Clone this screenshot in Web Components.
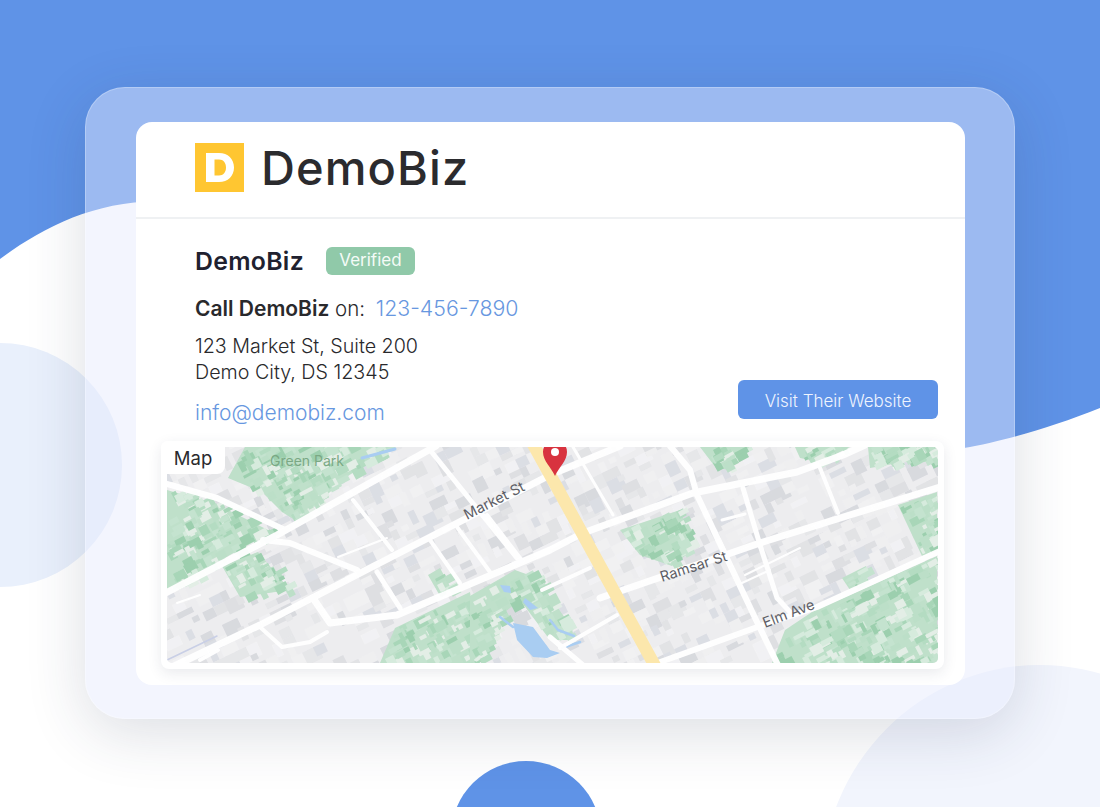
<!DOCTYPE html>
<html lang="en">
<head>
<meta charset="utf-8">
<title>DemoBiz</title>
<style>
html, body { margin: 0; padding: 0; background: #fff; }
body { font-family: Inter, "Liberation Sans", sans-serif; }
</style>
</head>
<body>
<demo-page>
  <demo-frame>
    <biz-card>
      <biz-logo slot="header">DemoBiz</biz-logo>
      <biz-info name="DemoBiz" phone="123-456-7890" email="info@demobiz.com">
        <span>123 Market St, Suite 200</span>
        <span>Demo City, DS 12345</span>
      </biz-info>
      <map-panel slot="map"></map-panel>
    </biz-card>
  </demo-frame>
</demo-page>

<script>
class DemoPage extends HTMLElement {
    constructor() {
        super();
        this.attachShadow({ mode: 'open' });
        this.shadowRoot.innerHTML = `
        <style>
            :host { display: block; position: relative; width: 1100px; height: 807px; overflow: hidden; background: #fff; }
            svg { position: absolute; inset: 0; }
            .wrap { position: relative; padding: 87px 0 0 85px; }
        </style>
        <svg width="1100" height="807" viewBox="0 0 1100 807">
            <path fill="#5f93e7" d="M0 0H1100V408C1050 428 1000 442 964 448C860 468 760 470 640 420C460 340 320 215 170 202C100 198 45 226 0 259Z"/>
            <circle cx="0" cy="465" r="122" fill="#e9f0fc"/>
            <circle cx="526" cy="836" r="75" fill="#5f93e7"/>
            <ellipse cx="1040" cy="885" rx="218" ry="220" fill="#f2f5fd"/>
        </svg>
        <div class="wrap"><slot></slot></div>`;
    }
}

class DemoFrame extends HTMLElement {
    constructor() {
        super();
        this.attachShadow({ mode: 'open' });
        this.shadowRoot.innerHTML = `
        <style>
            :host {
                display: block; box-sizing: border-box; width: 930px; height: 632px;
                padding: 34px 50px;
                border-radius: 40px;
                border: 1px solid rgba(255,255,255,.25);
                background: rgba(228,234,252,.46);
                box-shadow: 0 14px 60px rgba(40,50,80,.16);
            }
        </style>
        <slot></slot>`;
    }
}

class BizCard extends HTMLElement {
    constructor() {
        super();
        this.attachShadow({ mode: 'open' });
        this.shadowRoot.innerHTML = `
        <style>
            :host { display: flex; flex-direction: column; width: 829px; height: 563px; background: #fff; border-radius: 16px; }
            header { padding: 20px 59px 25px; border-bottom: 2px solid #eff1f3; }
            .map { padding: 0 21px 0 25px; }
        </style>
        <header><slot name="header"></slot></header>
        <slot></slot>
        <div class="map"><slot name="map"></slot></div>`;
    }
}

class BizLogo extends HTMLElement {
    constructor() {
        super();
        this.attachShadow({ mode: 'open' });
        this.shadowRoot.innerHTML = `
        <style>
            :host { display: flex; align-items: center; gap: 17px; height: 50px; font-size: 47px; font-weight: 500; color: #2b2b2e; letter-spacing: 1.100px; }
            svg { display: block; }
        </style>
        <svg width="49" height="49" viewBox="0 0 49 49">
            <rect width="49" height="49" fill="#ffc631"/>
            <path fill="#fff" fill-rule="evenodd" d="M11 10H24C33 10 39 16 39 24.500C39 33 33 39 24 39H11ZM19.500 16.500V32.500H24C28.500 32.500 31 29 31 24.500C31 20 28.500 16.500 24 16.500Z"/>
        </svg>
        <slot></slot>`;
    }
}

class BizInfo extends HTMLElement {
    constructor() {
        super();
        this.attachShadow({ mode: 'open' });
    }
    connectedCallback() {
        this.shadowRoot.innerHTML = `
        <style>
            :host { display: flex; justify-content: space-between; align-items: flex-start; height: 222px; box-sizing: border-box; padding: 28px 27px 21px 59px; color: #29292c; }
            .title { display: flex; align-items: center; gap: 22px; height: 28px; font-size: 24.800px; font-weight: 600; letter-spacing: .3px; color: #20212f; }
            .badge { display: flex; align-items: center; justify-content: center; width: 89px; height: 28px; padding-bottom: 2px; box-sizing: border-box; border-radius: 6px; background: #90c9a9; color: #f4fbf7; font-size: 17px; font-weight: 400; letter-spacing: 0; }
            .call { margin-top: 20px; font-size: 20.500px; line-height: 26px; font-weight: 300; white-space: nowrap; }
            .call b { font-weight: 600; font-size: 21px; }
            .call a { margin-left: 5px; font-size: 21.300px; }
            a { color: #6797e0; text-decoration: none; }
            .addr { margin-top: 11px; display: flex; flex-direction: column; font-size: 19.700px; line-height: 26px; font-weight: 300; }
            .mail { display: block; margin-top: 15px; font-size: 21px; line-height: 26px; font-weight: 300; }
            .visit { align-self: flex-end; width: 200px; height: 39px; padding-top: 3px; margin-bottom: 1px; border: 0; border-radius: 6px; background: #5f93e7; color: #eef4fe; font: 300 17px Inter, "Liberation Sans", sans-serif; }
        </style>
        <div>
            <div class="title"><span>${this.getAttribute('name')}</span><span class="badge">Verified</span></div>
            <div class="call"><b>Call ${this.getAttribute('name')}</b> on: <a>${this.getAttribute('phone')}</a></div>
            <div class="addr"><slot></slot></div>
            <a class="mail">${this.getAttribute('email')}</a>
        </div>
        <button class="visit">Visit Their Website</button>`;
    }
}

// small repeatable random so the map texture stays the same on every load
function seeded(n) {
    return () => (n = (n * 16807) % 2147483647) / 2147483647;
}

// city blocks laid out on a grid tilted along the streets
function mapTexture() {
    const rnd = seeded(4711);
    const greys = ['#f3f3f5', '#f0f0f2', '#f5f5f6', '#f1f1f3', '#e2e3e6', '#dcdde1', '#d6d7dc', '#d3d6df', '#cdcfd6'];
    let out = '';
    for (let i = -10; i < 80; i++) {
        for (let j = -10; j < 70; j++) {
            if (rnd() > .6) continue;
            const w = 7 + Math.floor(rnd() * 3) * 5, h = 6 + Math.floor(rnd() * 3) * 4;
            const c = greys[Math.floor(rnd() * greys.length)];
            out += `<rect x="${i * 12}" y="${j * 10}" width="${w}" height="${h}" fill="${c}"/>`;
        }
    }
    return `<g transform="translate(150 560) rotate(-26)" opacity=".65">${out}</g>`;
}

function inside(p, poly) {
    let hit = false;
    for (let i = 0, j = poly.length - 1; i < poly.length; j = i++) {
        const a = poly[i], b = poly[j];
        if ((a[1] > p[1]) !== (b[1] > p[1]) && p[0] < (b[0] - a[0]) * (p[1] - a[1]) / (b[1] - a[1]) + a[0]) hit = !hit;
    }
    return hit;
}

// jagged park: a pale base with small patches scattered over it, edges left rough
function greenTexture(points, n) {
    const rnd = seeded(points.length * 97 + n);
    const xs = points.map(p => p[0]), ys = points.map(p => p[1]);
    const x0 = Math.min(...xs), x1 = Math.max(...xs), y0 = Math.min(...ys), y1 = Math.max(...ys);
    const cols = ['#b4dcc2', '#c4e3cf', '#a8d6b8', '#d6ebdd', '#bcdfc8', '#9ccfae', '#e3eee6'];
    let out = `<polygon points="${points.join(' ')}" fill="#bfe0ca"/>`;
    for (let i = 0; i < n * 3; i++) {
        const x = x0 + rnd() * (x1 - x0), y = y0 + rnd() * (y1 - y0);
        if (!inside([x, y], points)) continue;
        const w = 3 + rnd() * 11, h = 3 + rnd() * 8;
        out += `<rect x="${x.toFixed(0)}" y="${y.toFixed(0)}" width="${w.toFixed(0)}" height="${h.toFixed(0)}" fill="${cols[Math.floor(rnd() * cols.length)]}" transform="rotate(-28 ${x.toFixed(0)} ${y.toFixed(0)})"/>`;
    }
    return out;
}

class MapPanel extends HTMLElement {
    constructor() {
        super();
        this.attachShadow({ mode: 'open' });
    }
    connectedCallback() {
        const greens = [
            [[[245, 447], [300, 447], [392, 447], [345, 478], [298, 522], [282, 512], [262, 492], [228, 478]], 110],
            [[[167, 490], [218, 505], [272, 532], [230, 555], [167, 590]], 90],
            [[[222, 566], [258, 552], [290, 590], [240, 597]], 25],
            [[[395, 628], [470, 592], [480, 663], [380, 663]], 45],
            [[[470, 596], [515, 570], [537, 578], [572, 628], [574, 640], [550, 640], [520, 600], [505, 612], [498, 640], [470, 663]], 60],
            [[[620, 530], [680, 510], [695, 548], [672, 566], [640, 555]], 30],
            [[[812, 612], [937, 556], [937, 663], [772, 663], [785, 630]], 110],
            [[[898, 505], [937, 492], [937, 552], [922, 556]], 20],
            [[[700, 447], [750, 447], [735, 458], [730, 470], [716, 468]], 14],
            [[[868, 447], [937, 447], [937, 462], [905, 462], [870, 468]], 20],
            [[[842, 578], [866, 566], [868, 584], [850, 590]], 5],
            [[[795, 447], [850, 447], [820, 462], [800, 458]], 8],
            [[[428, 575], [440, 568], [452, 590], [440, 596]], 6]
        ].map(g => greenTexture(g[0], g[1])).join('');

        const roads = [
            ['M160 596L277 535L436 446', 7],
            ['M170 668L260 625L370 568L467 518L550 475L620 446', 7],
            ['M313 598L330 623L397 615L550 550L583 533L693 493L797 472L843 455L865 445', 7],
            ['M600 598L763 542L940 487', 7],
            ['M652 665L763 625L817 607L940 551', 6],
            ['M430 450L517 558', 5],
            ['M160 482L217 498L285 530', 6],
            ['M263 540L290 543L357 570', 6],
            ['M260 627L282 647L310 642L327 632', 4],
            ['M353 500L392 550', 4],
            ['M377 572L400 608', 5],
            ['M430 540L460 583', 4],
            ['M457 527L490 572', 4],
            ['M487 515L520 558', 4],
            ['M670 446L690 470L697 495L757 622L778 665', 6],
            ['M743 488L760 545L777 598L792 614', 5],
            ['M820 468L838 513', 4],
            ['M573 447L613 515', 3],
            ['M542 590L590 568', 4],
            ['M560 648L617 615', 4],
            ['M550 637L583 665', 5],
            ['M710 520L726 552', 2],
            ['M722 520L745 514', 3],
            ['M745 575L800 548', 2],
            ['M742 583L770 570', 2],
            ['M338 557L387 538', 2],
            ['M177 603L200 595', 2],
            ['M200 660L218 650', 4]
        ].map(r => `<path d="${r[0]}" stroke-width="${r[1]}"/>`).join('');

        this.shadowRoot.innerHTML = `
        <style>
            :host { display: block; position: relative; box-sizing: border-box; width: 783px; height: 228px; padding: 6px; background: #fff; border-radius: 8px; box-shadow: 0 4px 14px rgba(40,50,80,.1); }
            svg { display: block; border-radius: 5px; }
            .tag { position: absolute; left: 0; top: 0; width: 64px; height: 33px; display: flex; align-items: center; justify-content: center; background: #fff; border-radius: 6px 0 8px 0; color: #2a2a2d; font-size: 18.500px; font-weight: 400; }
            text { font-family: Inter, "Liberation Sans", sans-serif; font-size: 14.500px; fill: #5d5e66; }
        </style>
        <svg width="771" height="216" viewBox="167 447 771 216">
            <defs><filter id="soft"><feGaussianBlur stdDeviation=".7"/></filter></defs>
            <rect x="167" y="447" width="771" height="216" fill="#ededef"/>
            <g filter="url(#soft)">
                ${mapTexture()}
                ${greens}
                <g fill="#a9cdf2">
                    <polygon points="513,623 533,627 550,650 560,653 547,658 533,657 517,640"/>
                    <polygon points="525,598 538,608 530,610 523,602"/>
                    <polygon points="500,585 510,586 511,593 504,592"/>
                </g>
                <g fill="none" stroke="#a9cdf2" stroke-linecap="round" stroke-linejoin="round">
                    <path d="M362 458L395 449" stroke-width="3"/>
                    <path d="M500 617L513 627M550 620L558 630L574 636M562 648L580 642" stroke-width="2.500"/>
                    <path d="M167 660L217 636" stroke="#c9cfe6" stroke-width="1.500"/>
                </g>
                <g fill="none" stroke="#fff" stroke-linecap="round" stroke-linejoin="round" opacity=".97">${roads}</g>
                <path d="M533 444L554 482L655 666" fill="none" stroke="#fce7ac" stroke-width="12.500"/>
            </g>
            <text x="270" y="466" style="fill:#7aa884;font-size:14px">Green Park</text>
            <text transform="translate(467 520) rotate(-27)">Market St</text>
            <text transform="translate(662 582) rotate(-18)">Ramsar St</text>
            <text transform="translate(765 628) rotate(-21)">Elm Ave</text>
            <path fill="#d8333f" d="M555 476C551 467 543 461 543 452C543 445 548 441 555 441C562 441 567 445 567 452C567 461 559 467 555 476Z"/>
            <circle cx="555" cy="452" r="4" fill="#fff"/>
        </svg>
        <div class="tag">Map</div>`;
    }
}

customElements.define('demo-page', DemoPage);
customElements.define('demo-frame', DemoFrame);
customElements.define('biz-card', BizCard);
customElements.define('biz-logo', BizLogo);
customElements.define('biz-info', BizInfo);
customElements.define('map-panel', MapPanel);
</script>
</body>
</html>
